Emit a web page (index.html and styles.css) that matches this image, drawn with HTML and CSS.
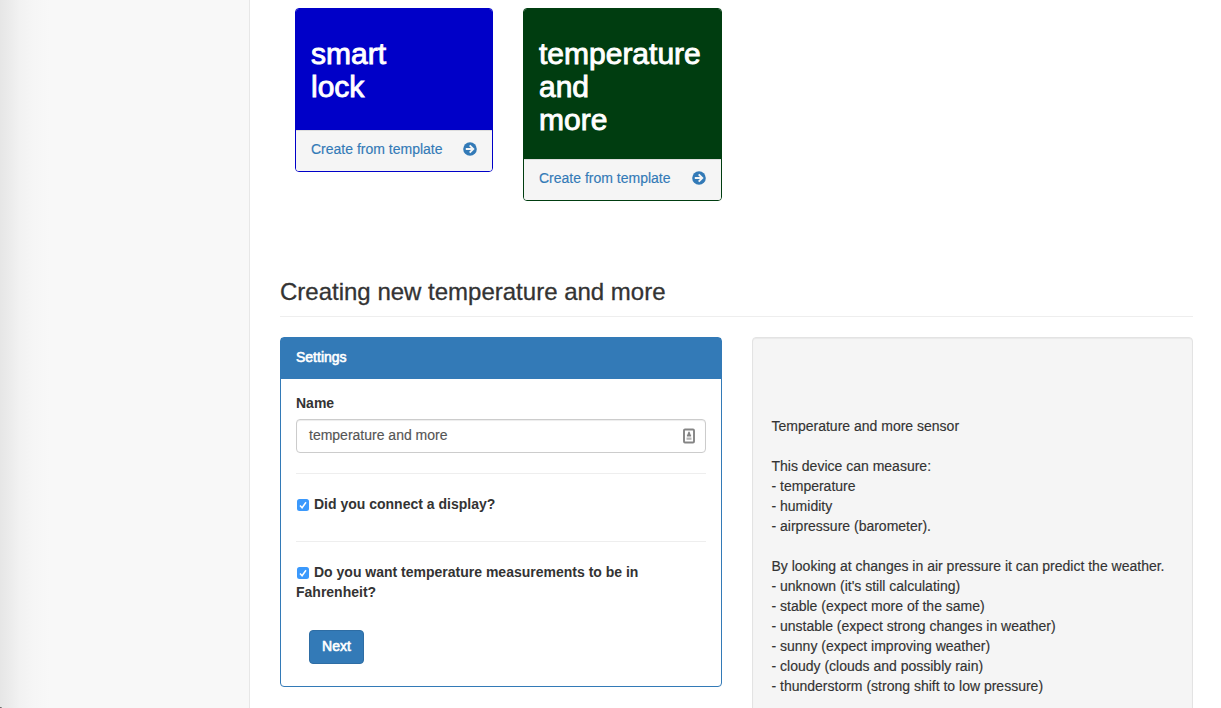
FILE: index.html
```html
<!DOCTYPE html>
<html lang="en">
<head>
<meta charset="utf-8">
<title>Create device</title>
<link rel="stylesheet" href="styles.css">
</head>
<body>
<div class="page">
  <aside class="sidebar"></aside>
  <main class="content">
    <section class="templates">
      <article class="card card-blue">
        <div class="card-head"><h2>smart<br>lock</h2></div>
        <a class="card-foot"><span>Create from template</span>
          <svg class="arrow" viewBox="0 0 14 14"><circle cx="7" cy="7" r="6.8" fill="#337ab7"/><path d="M2.8 7H10M6.7 3.4 10.3 7 6.7 10.6" fill="none" stroke="#f5f5f5" stroke-width="1.9"/></svg>
        </a>
      </article>
      <article class="card card-green">
        <div class="card-head"><h2>temperature<br>and<br>more</h2></div>
        <a class="card-foot"><span>Create from template</span>
          <svg class="arrow" viewBox="0 0 14 14"><circle cx="7" cy="7" r="6.8" fill="#337ab7"/><path d="M2.8 7H10M6.7 3.4 10.3 7 6.7 10.6" fill="none" stroke="#f5f5f5" stroke-width="1.9"/></svg>
        </a>
      </article>
    </section>
    <h3 class="page-title">Creating new temperature and more</h3>
    <section class="columns">
      <form class="panel">
        <div class="panel-head">Settings</div>
        <div class="panel-body">
          <div class="label">Name</div>
          <div class="input"><span>temperature and more</span>
            <svg class="contact" viewBox="0 0 12 16"><rect x="1" y="1.5" width="10" height="13" rx="1" fill="#fff" stroke="#858585" stroke-width="1.9"/><path d="M6 3.2 7.2 5v1.6h.9v2H3.9v-2h.9V5z" fill="#858585"/><path d="M3.5 9.5h5v2.3h-5z" fill="#b5b5b5"/></svg>
          </div>
          <hr>
          <div class="option"><svg class="check" viewBox="0 0 12 12"><rect width="12" height="12" rx="2.5" fill="#3b99fc"/><path d="M3 6.4 5.1 8.8 9 3.2" fill="none" stroke="#fff" stroke-width="1.5"/></svg>Did you connect a display?</div>
          <hr class="second">
          <div class="option"><svg class="check" viewBox="0 0 12 12"><rect width="12" height="12" rx="2.5" fill="#3b99fc"/><path d="M3 6.4 5.1 8.8 9 3.2" fill="none" stroke="#fff" stroke-width="1.5"/></svg>Do you want temperature measurements to be in Fahrenheit?</div>
          <button type="button" class="next">Next</button>
        </div>
      </form>
      <div class="well">Temperature and more sensor

This device can measure:
- temperature
- humidity
- airpressure (barometer).

By looking at changes in air pressure it can predict the weather.
- unknown (it's still calculating)
- stable (expect more of the same)
- unstable (expect strong changes in weather)
- sunny (expect improving weather)
- cloudy (clouds and possibly rain)
- thunderstorm (strong shift to low pressure)</div>
    </section>
  </main>
</div>
</body>
</html>
```
FILE: styles.css
```css
* { box-sizing: border-box; }
body {
  margin: 0;
  overflow: hidden;
  background: #fff;
  color: #333;
  font: 14px/20px "Liberation Sans", Arial, sans-serif;
}
.page { display: flex; height: 708px; overflow: hidden; }
.sidebar {
  flex: none;
  display: flex;
  align-items: flex-end;
  width: 250px;
  border-right: 1px solid #e7e7e7;
  background: linear-gradient(90deg, #e6e6e6 0, #ebebeb 9px, #f2f2f2 20px, #f6f6f6 34px, #f8f8f8 50px);
}
/* window corner */
.sidebar::after { content: ""; width: 2px; height: 1px; background: linear-gradient(90deg, #555, #aaa); }
.content { width: 943px; padding: 8px 0 0 30px; }
.templates { display: flex; align-items: flex-start; gap: 30px; height: 262px; padding-left: 15px; }
.card {
  width: 198px;
  border: 1px solid;
  border-radius: 4px;
  overflow: hidden;
}
.card-green { width: 199px; border-color: #003d10; }
.card-blue { border-color: #0000c8; }
.card-head { padding: 28px 15px 0; color: #fff; }
.card-blue .card-head { height: 121px; background: #0000c8; }
.card-green .card-head { height: 150px; background: #003d10; }
h2 { margin: 0; font-size: 30px; line-height: 33px; font-weight: 400; -webkit-text-stroke: .9px #fff; }
.card-foot {
  display: flex;
  justify-content: space-between;
  height: 41px;
  padding: 8px 15px 0;
  border-top: 1px solid #ddd;
  background: #f5f5f5;
  color: #337ab7;
  -webkit-text-stroke: .15px;
}
.arrow { width: 14px; height: 14px; margin-top: 3px; }
.page-title {
  width: 913px;
  height: 47px;
  margin: 0 0 20px;
  padding-top: 9px;
  border-bottom: 1px solid #eee;
  font-size: 24px;
  line-height: 26px;
  font-weight: 400;
  -webkit-text-stroke: .3px;
}
.columns { display: flex; align-items: flex-start; gap: 30px; }
.panel { width: 442px; height: 350px; border: 1px solid #337ab7; border-radius: 4px; }
.panel-head {
  height: 41px;
  padding: 9px 15px;
  background: #337ab7;
  color: #fff;
  -webkit-text-stroke: .6px #fff;
}
.panel-body { padding: 14px 15px; }
.label, .option { font-weight: 700; }
.input {
  display: flex;
  justify-content: space-between;
  height: 34px;
  margin-top: 6px;
  padding: 5px 10px 0 12px;
  border: 1px solid #ccc;
  border-radius: 4px;
  box-shadow: inset 0 1px 1px rgba(0,0,0,.075);
  color: #555;
  -webkit-text-stroke: .15px;
}
.contact { width: 12px; height: 16px; margin-top: 3px; }
hr { margin: 20px 0; border: 0; border-top: 1px solid #eee; }
hr.second { margin-top: 27px; }
.check { width: 12px; height: 12px; margin: 0 5px 0 1px; vertical-align: -2px; }
.next {
  display: block;
  width: 55px;
  height: 34px;
  margin: 28px 0 0 13px;
  padding: 0 0 2px;
  border: 1px solid #2e6da4;
  border-radius: 4px;
  background: #337ab7;
  color: #fff;
  font: inherit;
  -webkit-text-stroke: .6px #fff;
}
.well {
  width: 441px;
  height: 400px;
  padding: 78px 18px 0 18.5px;
  border: 1px solid #e3e3e3;
  border-radius: 4px;
  background: #f5f5f5;
  box-shadow: inset 0 1px 1px rgba(0,0,0,.05);
  white-space: pre-wrap;
  -webkit-text-stroke: .15px;
}
```
